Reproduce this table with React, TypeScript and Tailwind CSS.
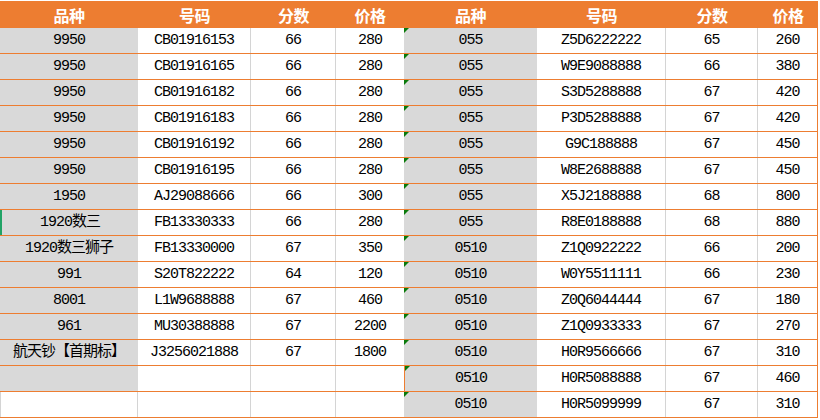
type Row = [string, string, string, string];

const left: (Row | null)[] = [
  ["9950", "CB01916153", "66", "280"],
  ["9950", "CB01916165", "66", "280"],
  ["9950", "CB01916182", "66", "280"],
  ["9950", "CB01916183", "66", "280"],
  ["9950", "CB01916192", "66", "280"],
  ["9950", "CB01916195", "66", "280"],
  ["1950", "AJ29088666", "66", "300"],
  ["1920数三", "FB13330333", "66", "280"],
  ["1920数三狮子", "FB13330000", "67", "350"],
  ["991", "S20T822222", "64", "120"],
  ["8001", "L1W9688888", "67", "460"],
  ["961", "MU30388888", "67", "2200"],
  ["航天钞【首期标】", "J3256021888", "67", "1800"],
  ["", "", "", ""],
  null,
];

const right: Row[] = [
  ["055", "Z5D6222222", "65", "260"],
  ["055", "W9E9088888", "66", "380"],
  ["055", "S3D5288888", "67", "420"],
  ["055", "P3D5288888", "67", "420"],
  ["055", "G9C188888", "67", "450"],
  ["055", "W8E2688888", "67", "450"],
  ["055", "X5J2188888", "68", "800"],
  ["055", "R8E0188888", "68", "880"],
  ["0510", "Z1Q0922222", "66", "200"],
  ["0510", "W0Y5511111", "66", "230"],
  ["0510", "Z0Q6044444", "67", "180"],
  ["0510", "Z1Q0933333", "67", "270"],
  ["0510", "H0R9566666", "67", "310"],
  ["0510", "H0R5088888", "67", "460"],
  ["0510", "H0R5099999", "67", "310"],
];

const cell = "flex h-full items-center justify-center whitespace-nowrap";

function Header() {
  const h = "flex h-full items-center justify-center pt-[2px]";
  return (
    <div className="flex h-[26px] w-[818px] bg-[#ED7D31] font-['Noto_Sans_CJK_SC',sans-serif] text-[16px] font-bold tracking-[-0.5px] text-white">
      <div className={`${h} w-[138px]`}>品种</div>
      <div className={`${h} w-[113px]`}>号码</div>
      <div className={`${h} w-[85px]`}>分数</div>
      <div className={`${h} w-[68px]`}>价格</div>
      <div className={`${h} w-[133px]`}>品种</div>
      <div className={`${h} w-[129px]`}>号码</div>
      <div className={`${h} w-[92px]`}>分数</div>
      <div className={`${h} w-[60px]`}>价格</div>
    </div>
  );
}

function Triangle() {
  return (
    <span className="absolute left-0 top-0 h-0 w-0 border-r-[5px] border-t-[5px] border-r-transparent border-t-[#0A7A0A]" />
  );
}

export default function App() {
  return (
    <div className="h-[420px] w-[820px] overflow-hidden bg-white pt-[1px] font-['Liberation_Mono','Noto_Sans_CJK_SC',monospace] text-[15px] tracking-[-1px] text-black">
      <Header />
      {right.map((r, i) => {
        const l = left[i];
        return (
          <div
            key={i}
            className="flex h-[26px] w-[818px] border-t border-[#ED7D31]"
          >
            <div
              className={`${cell} w-[138px] ${
                l ? "bg-[#D9D9D9]" : "border-x border-[#D4D4D4]"
              } ${i === 7 ? "border-l-2 border-l-[#21A366]" : ""} pt-[2px]`}
            >
              {l?.[0]}
            </div>
            <div className={`${cell} w-[113px] border-r border-[#D4D4D4] pt-[2px]`}>
              {l?.[1]}
            </div>
            <div className={`${cell} w-[85px] border-r border-[#D4D4D4] pt-[2px]`}>
              {l?.[2]}
            </div>
            <div className={`${cell} w-[68px] pt-[2px]`}>{l?.[3]}</div>
            <div
              className={`${cell} relative w-[133px] bg-[#D9D9D9] pt-[2px] ${
                i === 13 ? "border-l border-[#ED7D31]" : ""
              }`}
            >
              <Triangle />
              {r[0]}
            </div>
            <div className={`${cell} w-[129px] border-r border-[#D4D4D4] pt-[2px]`}>
              {r[1]}
            </div>
            <div className={`${cell} w-[92px] border-r border-[#D4D4D4] pt-[2px]`}>
              {r[2]}
            </div>
            <div className={`${cell} w-[60px] border-r border-[#ED7D31] pt-[2px]`}>
              {r[3]}
            </div>
          </div>
        );
      })}
      <div className="h-0 w-[818px] border-t border-[#ED7D31]" />
    </div>
  );
}
